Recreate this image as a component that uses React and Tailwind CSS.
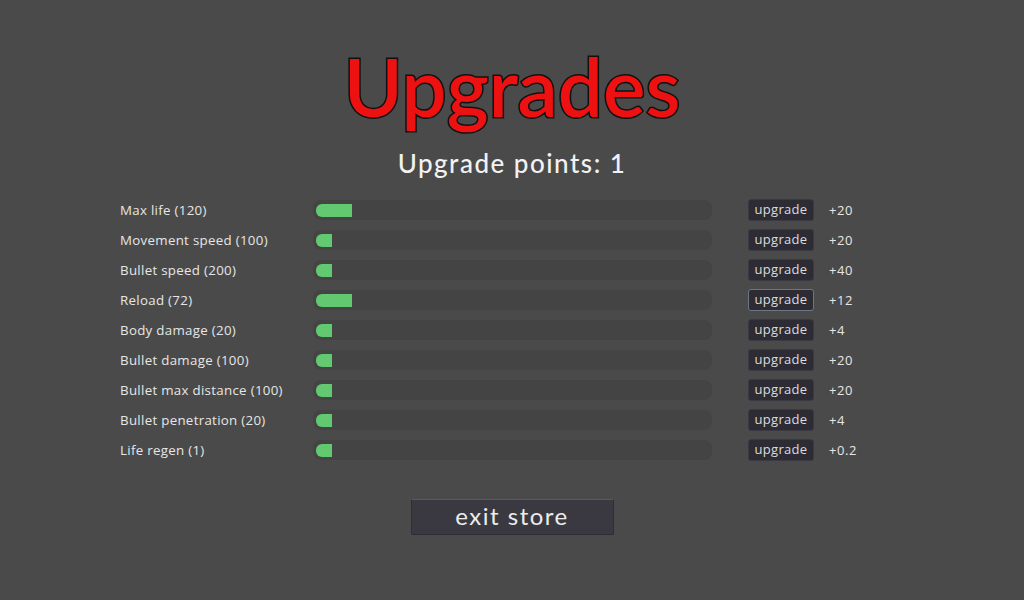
const stats = [
  { name: "Max life", value: 120, fill: 36, step: "+20" },
  { name: "Movement speed", value: 100, fill: 16, step: "+20" },
  { name: "Bullet speed", value: 200, fill: 16, step: "+40" },
  { name: "Reload", value: 72, fill: 36, step: "+12", focused: true },
  { name: "Body damage", value: 20, fill: 16, step: "+4" },
  { name: "Bullet damage", value: 100, fill: 16, step: "+20" },
  { name: "Bullet max distance", value: 100, fill: 16, step: "+20" },
  { name: "Bullet penetration", value: 20, fill: 16, step: "+4" },
  { name: "Life regen", value: 1, fill: 16, step: "+0.2" },
];

function StatRow({ stat }) {
  return (
    <div className="flex h-[30px] items-center">
      <div className="w-[193px] pt-[2px] text-[13.3px] tracking-[0.3px] text-[#e6e6e6]">
        {stat.name} ({stat.value})
      </div>
      <div className="flex h-[20px] w-[399px] items-center rounded-[8px] bg-[#444444] px-[3px]">
        <div
          className="h-[13px] rounded-l-[6px] bg-[#62c971]"
          style={{ width: stat.fill }}
        />
      </div>
      <button
        className={
          "ml-[36px] h-[22px] w-[66px] rounded-[3px] border bg-[#2d2c35] pb-[2px] text-[13px] leading-none tracking-[0.3px] text-[#dcdcdc] " +
          (stat.focused ? "border-[#6c7888]" : "border-[#3b3a44]")
        }
      >
        upgrade
      </button>
      <div className="ml-[15px] pt-[2px] text-[13px] tracking-[0.6px] text-[#e6e6e6]">{stat.step}</div>
    </div>
  );
}

export default function App() {
  return (
    <div className="flex h-[600px] w-[1024px] flex-col items-center bg-[#4a4a4a] font-['Open_Sans','Noto_Sans',sans-serif]">
      <h1 className="mt-[38px] h-[96px] font-['Lato',sans-serif] text-[80px] leading-[96px] font-semibold text-[#ee1111] [-webkit-text-stroke:3px_#111] [paint-order:stroke_fill]">
        Upgrades
      </h1>
      <div className="mt-[12px] font-['Lato',sans-serif] text-[26px] leading-[34px] font-medium tracking-[1.5px] text-[#f2f2f2]">
        Upgrade points: 1
      </div>
      <div className="mt-[15px] ml-[120px] flex w-[784px] flex-col self-start">
        {stats.map((s) => (
          <StatRow key={s.name} stat={s} />
        ))}
      </div>
      <button className="mt-[34px] h-[36px] w-[203px] rounded-[2px] border border-[#2e2d34] border-t-[#5a5963] bg-[#3a3942] pb-[2px] font-['Lato',sans-serif] text-[24px] leading-none tracking-[1.5px] text-[#ececec]">
        exit store
      </button>
    </div>
  );
}
